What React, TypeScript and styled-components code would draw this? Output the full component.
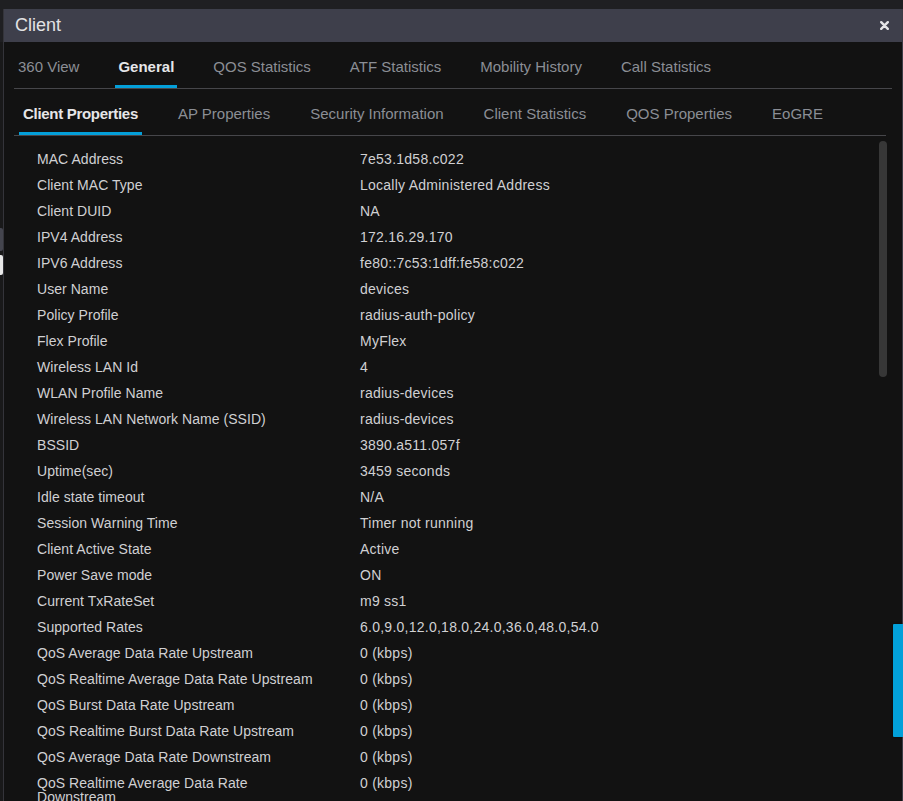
import React from "react";
import styled, { createGlobalStyle } from "styled-components";

const GlobalStyle = createGlobalStyle`
  html, body {
    margin: 0;
    padding: 0;
    background: #1f1f22;
    font-family: "Liberation Sans", Arial, sans-serif;
  }
  * { box-sizing: border-box; }
`;

const Page = styled.div`
  position: relative;
  width: 903px;
  height: 801px;
  overflow: hidden;
  padding-top: 9px;
  display: flex;
  background: #1f1f22;
`;

const BackdropStrip = styled.div`
  width: 3px;
  flex: none;
  display: flex;
  flex-direction: column;
  background: #19191a;
  margin-top: 33px;
`;

const PeekBlock = styled.div<{ $top: number; $h: number; $color: string }>`
  margin-top: ${(p) => p.$top}px;
  height: ${(p) => p.$h}px;
  background: ${(p) => p.$color};
  border-radius: 0 2px 2px 0;
`;

const Modal = styled.div`
  width: 900px;
  flex: none;
  display: flex;
  flex-direction: column;
  border-left: 1px solid #34343a;
  border-right: 1px solid #3c3c46;
  background: #121212;
`;

const Header = styled.div`
  height: 33px;
  flex: none;
  display: flex;
  align-items: center;
  justify-content: space-between;
  padding: 0 13px 0 11px;
  background: #3e3f4b;
`;

const Title = styled.div`
  font-size: 18px;
  color: #e2e2e4;
`;

const CloseButton = styled.button`
  border: none;
  background: transparent;
  padding: 0;
  width: 9px;
  height: 9px;
  display: flex;
  cursor: pointer;
`;

const Body = styled.div`
  flex: 1;
  display: flex;
  flex-direction: column;
  padding: 0 10px;
  min-height: 0;
`;

const TabBar = styled.div<{ $inset: number; $gap: number }>`
  display: flex;
  gap: ${(p) => p.$gap}px;
  padding-left: ${(p) => p.$inset}px;
  margin-right: ${(p) => (p.$inset > 2 ? 6 : 0)}px;
  border-bottom: 1px solid #46464a;
`;

const Tab = styled.div<{ $active?: boolean; $pad: number; $tight?: boolean }>`
  padding: 16px ${(p) => p.$pad}px 9px;
  font-size: 15px;
  line-height: 18px;
  white-space: nowrap;
  letter-spacing: ${(p) => (p.$active && p.$tight ? "-0.3px" : "0")};
  color: ${(p) => (p.$active ? "#e6e6e8" : "#8b8e95")};
  font-weight: ${(p) => (p.$active ? 700 : 400)};
  border-bottom: 3px solid ${(p) => (p.$active ? "#049fd9" : "transparent")};
  cursor: pointer;
`;

const Content = styled.div`
  position: relative;
  flex: 1;
  overflow: hidden;
  padding: 10px 0 0 23px;
`;

const Row = styled.div`
  display: grid;
  grid-template-columns: 280px 1fr;
  column-gap: 43px;
  align-items: start;
  padding: 6px 0;
  font-size: 14px;
  line-height: 14px;
  color: #d0d0d2;
`;

const Label = styled.div`
  letter-spacing: 0.05px;
`;

const Value = styled.div`
  white-space: nowrap;
  letter-spacing: 0.25px;
`;

const ScrollThumb = styled.div`
  position: absolute;
  right: 5px;
  top: 5px;
  width: 8px;
  height: 236px;
  border-radius: 4px;
  background: #373737;
`;

const SideTab = styled.div`
  position: absolute;
  left: 893px;
  top: 624px;
  width: 10px;
  height: 113px;
  background: #02a0d9;
  border-radius: 1px 0 0 1px;
  box-shadow: 0 0 3px rgba(0, 0, 0, 0.6);
`;

const mainTabs = [
  "360 View",
  "General",
  "QOS Statistics",
  "ATF Statistics",
  "Mobility History",
  "Call Statistics",
];

const subTabs = [
  "Client Properties",
  "AP Properties",
  "Security Information",
  "Client Statistics",
  "QOS Properties",
  "EoGRE",
];

const rows: [string, string][] = [
  ["MAC Address", "7e53.1d58.c022"],
  ["Client MAC Type", "Locally Administered Address"],
  ["Client DUID", "NA"],
  ["IPV4 Address", "172.16.29.170"],
  ["IPV6 Address", "fe80::7c53:1dff:fe58:c022"],
  ["User Name", "devices"],
  ["Policy Profile", "radius-auth-policy"],
  ["Flex Profile", "MyFlex"],
  ["Wireless LAN Id", "4"],
  ["WLAN Profile Name", "radius-devices"],
  ["Wireless LAN Network Name (SSID)", "radius-devices"],
  ["BSSID", "3890.a511.057f"],
  ["Uptime(sec)", "3459 seconds"],
  ["Idle state timeout", "N/A"],
  ["Session Warning Time", "Timer not running"],
  ["Client Active State", "Active"],
  ["Power Save mode", "ON"],
  ["Current TxRateSet", "m9 ss1"],
  ["Supported Rates", "6.0,9.0,12.0,18.0,24.0,36.0,48.0,54.0"],
  ["QoS Average Data Rate Upstream", "0 (kbps)"],
  ["QoS Realtime Average Data Rate Upstream", "0 (kbps)"],
  ["QoS Burst Data Rate Upstream", "0 (kbps)"],
  ["QoS Realtime Burst Data Rate Upstream", "0 (kbps)"],
  ["QoS Average Data Rate Downstream", "0 (kbps)"],
  ["QoS Realtime Average Data Rate Downstream", "0 (kbps)"],
];

export default function App() {
  return (
    <>
      <GlobalStyle />
      <Page>
        <BackdropStrip>
          <PeekBlock $top={186} $h={23} $color="#44454e" />
          <PeekBlock $top={4} $h={20} $color="#e8e8e8" />
        </BackdropStrip>
        <Modal>
          <Header>
            <Title>Client</Title>
            <CloseButton aria-label="Close">
              <svg width="9" height="9" viewBox="0 0 9 9">
                <path
                  d="M1.2 1.2 L7.8 7.8 M7.8 1.2 L1.2 7.8"
                  stroke="#e4e4e6"
                  strokeWidth="2.4"
                  strokeLinecap="round"
                />
              </svg>
            </CloseButton>
          </Header>
          <Body>
            <TabBar $inset={1} $gap={33}>
              {mainTabs.map((t) => (
                <Tab key={t} $pad={3} $active={t === "General"}>
                  {t}
                </Tab>
              ))}
            </TabBar>
            <TabBar $inset={5} $gap={32}>
              {subTabs.map((t) => (
                <Tab key={t} $pad={4} $tight $active={t === "Client Properties"}>
                  {t}
                </Tab>
              ))}
            </TabBar>
            <Content>
              {rows.map(([k, v]) => (
                <Row key={k}>
                  <Label>{k}</Label>
                  <Value>{v}</Value>
                </Row>
              ))}
              <ScrollThumb />
            </Content>
          </Body>
        </Modal>
        <SideTab />
      </Page>
    </>
  );
}
